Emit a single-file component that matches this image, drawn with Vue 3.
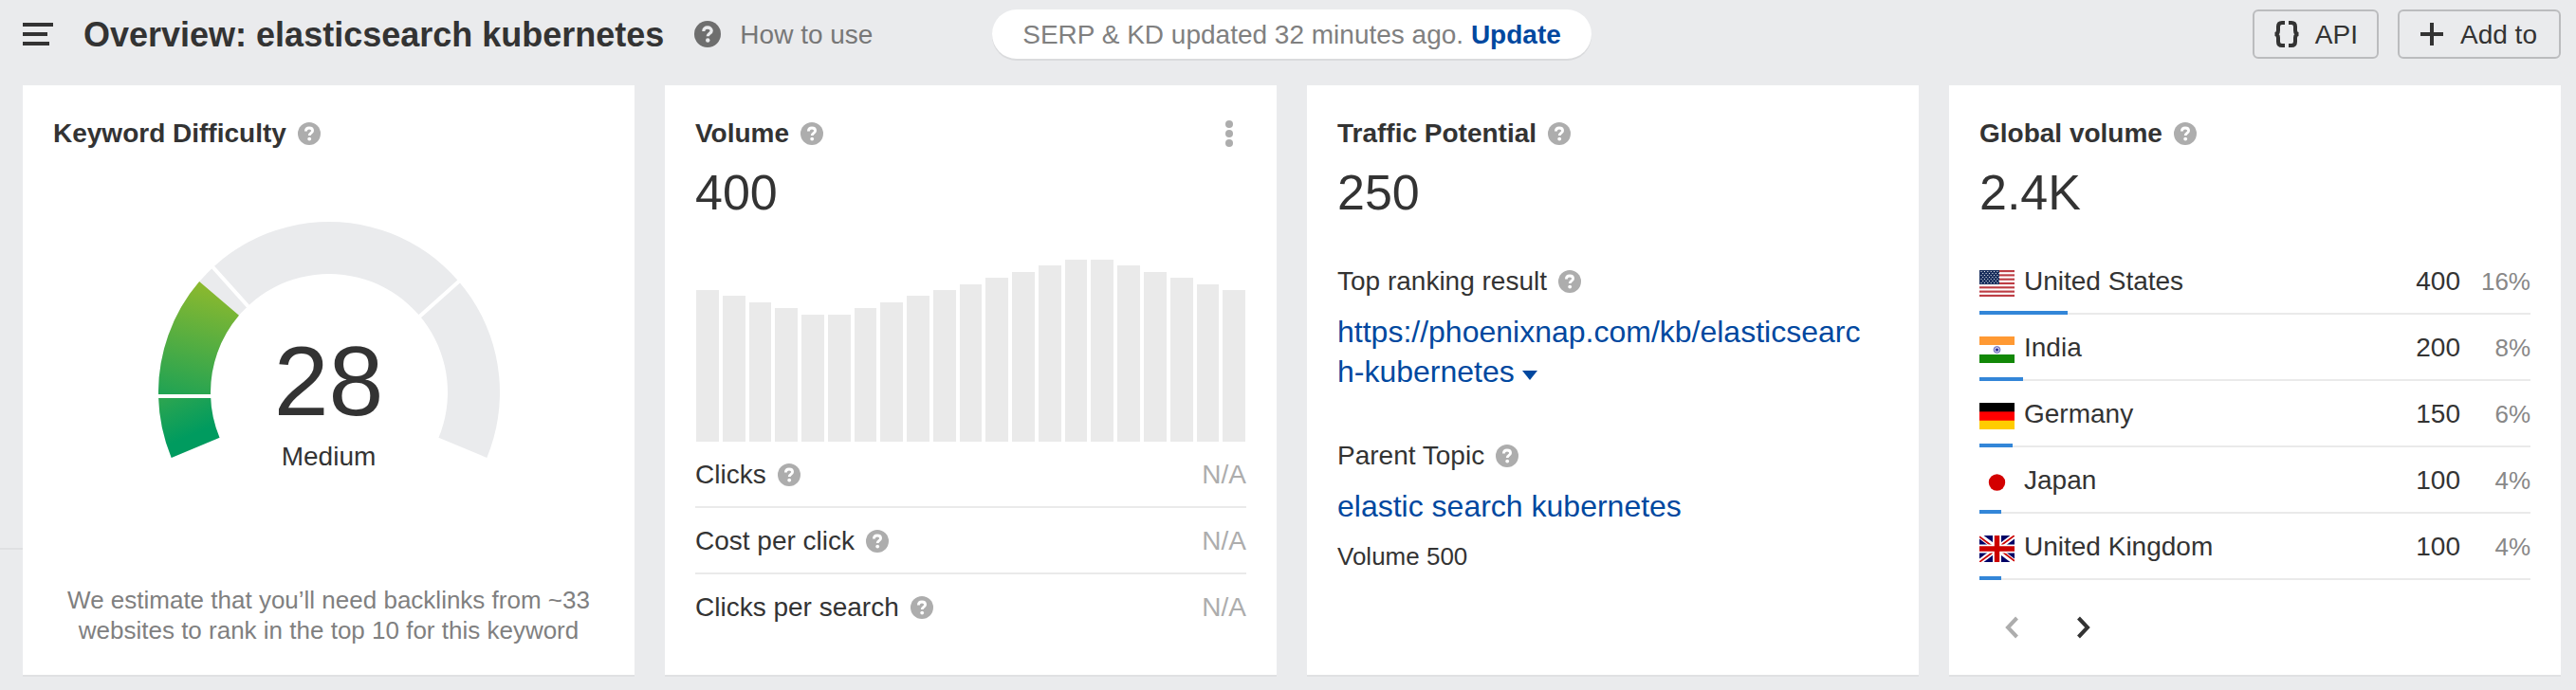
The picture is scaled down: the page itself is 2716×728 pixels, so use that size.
<script setup>
import { h } from 'vue'

const HelpIcon = () =>
  h('svg', { viewBox: '0 0 24 24', class: 'help', 'aria-hidden': 'true' }, [
    h('circle', { cx: 12, cy: 12, r: 12, fill: 'currentColor' }),
    h('path', {
      d: 'M8.4 9.4C8.4 7.2 10 6 12 6s3.6 1.2 3.6 3c0 2.3-3.4 2.500-3.4 4.9',
      fill: 'none',
      stroke: 'var(--help-mark)',
      'stroke-width': 2.8,
    }),
    h('circle', { cx: 12.2, cy: 17.6, r: 1.9, fill: 'var(--help-mark)' }),
  ])

const bars = [25, 24, 23, 22, 21, 21, 22, 23, 24, 25, 26, 27, 28, 29, 30, 30, 29, 28, 27, 26, 25]
const metrics = ['Clicks', 'Cost per click', 'Clicks per search']
const countries = [
  { code: 'us', name: 'United States', volume: 400, share: 16 },
  { code: 'in', name: 'India', volume: 200, share: 8 },
  { code: 'de', name: 'Germany', volume: 150, share: 6 },
  { code: 'jp', name: 'Japan', volume: 100, share: 4 },
  { code: 'gb', name: 'United Kingdom', volume: 100, share: 4 },
]

const point = (r, deg) => {
  const a = (deg * Math.PI) / 180
  return `${(180 - r * Math.cos(a)).toFixed(2)} ${(180 - r * Math.sin(a)).toFixed(2)}`
}
// Ring slice between two angles, measured clockwise from the left horizontal.
const ring = (from, to) => {
  const large = to - from > 180 ? 1 : 0
  return `M${point(180, from)}A180 180 0 ${large} 1 ${point(180, to)}L${point(125, to)}A125 125 0 ${large} 0 ${point(125, from)}Z`
}
const track = ring(-22.5, 202.5)
const filledLow = ring(-22.5, -1.5)
const filledHigh = ring(-1.5, 40.5)

const stars = []
for (let r = 0; r < 7; r++) {
  for (let c = 0; c < 6; c++) stars.push({ x: 2 + c * 3.4 + (r % 2 ? 1.7 : 0), y: 1.5 + r * 2 })
}
</script>

<template>
  <div class="page">
    <header class="topbar">
      <div class="left">
        <button class="icon-button" aria-label="Menu">
          <svg class="menu" viewBox="0 0 32 24"><path d="M0 0h32v4H0zM0 10h26v4H0zM0 20h28v4H0z" /></svg>
        </button>
        <h1>Overview: elasticsearch kubernetes</h1>
        <a href="#" class="how"><HelpIcon /><span>How to use</span></a>
      </div>
      <div class="notice">
        <span>SERP &amp; KD updated 32 minutes ago. </span><a href="#">Update</a>
      </div>
      <div class="right">
        <button class="action">
          <svg viewBox="0 0 28 28">
            <path class="brace" d="M12 2H9Q5 2 5 6v4q0 4-3.5 4Q5 14 5 18v4q0 4 4 4h3M16 2h3q4 0 4 4v4q0 4 3.5 4Q23 14 23 18v4q0 4-4 4h-3" />
          </svg>
          <span>API</span>
        </button>
        <button class="action add">
          <svg viewBox="0 0 28 28"><path d="M12 2h4v10h10v4H16v10h-4V16H2v-4h10z" /></svg>
          <span>Add to</span>
        </button>
      </div>
    </header>

    <hr class="edge" />

    <main class="cards">
      <section class="card">
        <h2>Keyword Difficulty <HelpIcon /></h2>
        <div class="gauge">
          <svg viewBox="0 0 360 252" role="img" aria-label="Keyword difficulty 28 of 100">
            <defs>
              <linearGradient id="kd-low" gradientUnits="userSpaceOnUse" x1="24" y1="180" x2="42" y2="222">
                <stop offset="0" stop-color="#2aa551" />
                <stop offset="1" stop-color="#009b5f" />
              </linearGradient>
              <linearGradient id="kd-high" gradientUnits="userSpaceOnUse" x1="28" y1="186" x2="58" y2="68">
                <stop offset="0" stop-color="#21a353" />
                <stop offset="1" stop-color="#8cb92e" />
              </linearGradient>
            </defs>
            <path :d="track" fill="#eaebed" />
            <path :d="filledLow" fill="url(#kd-low)" />
            <path :d="filledHigh" fill="url(#kd-high)" />
            <path d="M0 184H58M54 44L97 92M320 60L273 102" stroke="#fff" stroke-width="4" />
          </svg>
          <div class="score">
            <strong>28</strong>
            <span>Medium</span>
          </div>
        </div>
        <p class="estimate">We estimate that you’ll need backlinks from ~33 websites to rank in the top 10 for this keyword</p>
      </section>

      <section class="card">
        <div class="card-head">
          <h2>Volume <HelpIcon /></h2>
          <button class="icon-button more" aria-label="More options">
            <svg viewBox="0 0 8 28"><circle cx="4" cy="4" r="4" /><circle cx="4" cy="14" r="4" /><circle cx="4" cy="24" r="4" /></svg>
          </button>
        </div>
        <p class="big">400</p>
        <div class="chart">
          <i v-for="(b, i) in bars" :key="i" :style="{ height: (b / 30) * 100 + '%' }"></i>
        </div>
        <dl class="metrics">
          <div v-for="m in metrics" :key="m">
            <dt>{{ m }} <HelpIcon /></dt>
            <dd>N/A</dd>
          </div>
        </dl>
      </section>

      <section class="card">
        <h2>Traffic Potential <HelpIcon /></h2>
        <p class="big">250</p>
        <h3 class="first">Top ranking result <HelpIcon /></h3>
        <p class="link">
          <a href="#">https://phoenixnap.com/kb/elasticsearch-kubernetes</a>
          <svg class="caret" viewBox="0 0 16 10"><path d="M0 0h16L8 10z" /></svg>
        </p>
        <h3 class="second">Parent Topic <HelpIcon /></h3>
        <p class="link"><a href="#">elastic search kubernetes</a></p>
        <p class="small">Volume 500</p>
      </section>

      <section class="card">
        <h2>Global volume <HelpIcon /></h2>
        <p class="big">2.4K</p>
        <ul class="countries">
          <li v-for="c in countries" :key="c.code">
            <svg class="flag" viewBox="0 0 37 28" preserveAspectRatio="none">
              <template v-if="c.code === 'us'">
                <rect width="37" height="28" fill="#fff" />
                <rect v-for="n in 7" :key="n" :y="(n - 1) * 4.31" width="37" height="2.15" fill="#bd3d44" />
                <rect width="21" height="15" fill="#192f5d" />
                <circle v-for="(s, i) in stars" :key="i" :cx="s.x" :cy="s.y" r="0.6" fill="#fff" />
              </template>
              <template v-else-if="c.code === 'in'">
                <rect width="37" height="28" fill="#fff" />
                <rect width="37" height="9" fill="#f93" />
                <rect y="19" width="37" height="9" fill="#128807" />
                <circle cx="18.5" cy="14" r="3.4" fill="#c5c5e8" stroke="#6666b8" />
                <circle cx="18.5" cy="14" r="1.6" fill="#2a2a98" />
              </template>
              <template v-else-if="c.code === 'de'">
                <rect width="37" height="28" fill="#000" />
                <rect y="9.3" width="37" height="10" fill="#f00" />
                <rect y="18.7" width="37" height="9.3" fill="#fc0" />
              </template>
              <template v-else-if="c.code === 'jp'">
                <rect width="37" height="28" fill="#fff" />
                <circle cx="18.5" cy="14" r="8.7" fill="#d30000" />
              </template>
              <template v-else>
                <rect width="37" height="28" fill="#006" />
                <path d="M0 0L37 28M37 0L0 28" stroke="#fff" stroke-width="5.5" />
                <path d="M0 1.2L15 12.5M37 0L22 11M0 28L15 17M37 26.8L22 15.5" stroke="#c00" stroke-width="1.8" />
                <path d="M18.5 0v28M0 14h37" stroke="#fff" stroke-width="9" />
                <path d="M18.5 0v28M0 14h37" stroke="#c00" stroke-width="5.4" />
              </template>
            </svg>
            <span class="name">{{ c.name }}</span>
            <span class="count">{{ c.volume }}</span>
            <span class="share">{{ c.share }}%</span>
            <i class="meter" :style="{ width: c.share + '%' }"></i>
          </li>
        </ul>
        <nav class="pager">
          <button class="icon-button" disabled aria-label="Previous">
            <svg viewBox="0 0 16 24"><path d="M13.5 2L4 12l9.5 10" /></svg>
          </button>
          <button class="icon-button" aria-label="Next">
            <svg viewBox="0 0 16 24"><path d="M2.5 2L12 12l-9.5 10" /></svg>
          </button>
        </nav>
      </section>
    </main>
  </div>
</template>

<style>
body {
  background: #eaebed;
}
</style>

<style scoped>
* {
  box-sizing: border-box;
}
.page {
  --help-mark: #fff;
  position: relative;
  min-height: 100vh;
  padding: 10px 16px 16px 24px;
  background: #eaebed;
  color: #333;
  font: 28px/32px 'Liberation Sans', Arial, sans-serif;
}
h1, h2, h3, p, ul, dl, dd {
  margin: 0;
  padding: 0;
}
a {
  color: #00489f;
  text-decoration: none;
}
button {
  color: inherit;
  font: inherit;
}
svg {
  display: block;
  flex: none;
}
.icon-button {
  padding: 0;
  border: 0;
  background: none;
}
.help {
  width: 24px;
  height: 24px;
  color: #adadad;
}
.topbar {
  display: grid;
  grid-template-columns: 1fr auto 1fr;
  align-items: center;
  height: 52px;
}
.left,
.right,
.how {
  display: flex;
  align-items: center;
}
.menu {
  width: 32px;
  height: 24px;
  fill: #333;
}
h1 {
  margin-left: 32px;
  padding-top: 2px;
  font-size: 36px;
  line-height: 44px;
  white-space: nowrap;
}
.how {
  --help-mark: #eaebed;
  gap: 20px;
  margin-left: 32px;
  color: #777;
}
.how span,
.action span {
  padding-top: 2px;
}
.how .help {
  width: 28px;
  height: 28px;
  color: #6e6e6e;
}
.notice {
  padding: 11px 32px 9px;
  border-radius: 26px;
  background: #fff;
  box-shadow: 0 2px 0 #dadbdd;
  color: #808080;
  white-space: pre;
}
.notice a {
  font-weight: bold;
}
.right {
  justify-content: flex-end;
  gap: 20px;
}
.action {
  display: flex;
  align-items: center;
  gap: 16px;
  height: 52px;
  padding: 0 20px;
  border: 2px solid #bbbcbe;
  border-radius: 6px;
  background: none;
}
.add {
  min-width: 172px;
}
.action svg {
  width: 28px;
  height: 28px;
  fill: #333;
}
.brace {
  fill: none;
  stroke: #333;
  stroke-width: 4;
}
.edge {
  position: absolute;
  top: 578px;
  left: 0;
  width: 24px;
  height: 2px;
  margin: 0;
  border: 0;
  background: #dfe0e2;
}
.cards {
  display: grid;
  grid-template-columns: repeat(4, minmax(0, 1fr));
  gap: 32px;
  margin-top: 28px;
}
.card {
  display: flex;
  flex-direction: column;
  min-height: 622px;
  padding: 35px 32px 31px;
  background: #fff;
  box-shadow: 0 2px 0 #e0e1e3;
}
h2,
h3,
dt {
  display: flex;
  align-items: center;
  gap: 12px;
  font-size: 28px;
  line-height: 32px;
}
h3 {
  font-weight: normal;
}
.card-head {
  display: flex;
  align-items: center;
  justify-content: space-between;
}
.more {
  width: 36px;
}
.more svg {
  width: 8px;
  height: 28px;
  margin: 0 auto;
  fill: #adadad;
}
.big {
  margin-top: 16px;
  font-size: 52px;
  line-height: 60px;
}
.gauge {
  display: grid;
  justify-items: center;
  margin-top: 77px;
}
.gauge > * {
  grid-area: 1 / 1;
}
.gauge svg {
  width: 360px;
  height: 252px;
}
.score {
  display: flex;
  flex-direction: column;
  align-items: center;
  padding-top: 112px;
}
.score strong {
  font-size: 104px;
  font-weight: normal;
  line-height: 112px;
}
.score span {
  margin-top: 8px;
}
.estimate {
  margin-top: auto;
  color: #808080;
  font-size: 26px;
  text-align: center;
}
.chart {
  display: flex;
  align-items: flex-end;
  gap: 4px;
  height: 192px;
  margin: 41px 1px 0;
}
.chart i {
  flex: 1;
  background: #eaeaea;
}
.metrics div {
  display: flex;
  align-items: center;
  justify-content: space-between;
  height: 70px;
  padding-top: 2px;
  border-bottom: 2px solid #eaeaea;
}
.metrics div:last-child {
  border-color: transparent;
}
.metrics dd {
  color: #adadad;
}
.first {
  margin-top: 48px;
}
.second {
  margin-top: 52px;
}
.link {
  margin-top: 16px;
  padding-right: 24px;
  font-size: 32px;
  line-height: 42px;
  word-break: break-all;
}
.caret {
  display: inline-block;
  width: 16px;
  height: 10px;
  margin-left: 8px;
  vertical-align: 2px;
  fill: #00489f;
}
.small {
  margin-top: 16px;
  font-size: 26px;
}
.countries {
  margin-top: 29px;
  list-style: none;
}
.countries li {
  position: relative;
  display: flex;
  align-items: center;
  height: 70px;
  padding-top: 2px;
  border-bottom: 2px solid #eaeaea;
}
.flag {
  width: 37px;
  height: 28px;
  margin-top: 4px;
}
.name {
  flex: 1;
  margin-left: 10px;
}
.share {
  width: 74px;
  color: #888;
  font-size: 26px;
  text-align: right;
}
.meter {
  position: absolute;
  bottom: -2px;
  left: 0;
  height: 4px;
  background: #3386d8;
}
.pager {
  display: flex;
  gap: 60px;
  margin: 38px 0 0 26px;
}
.pager svg {
  width: 16px;
  height: 24px;
  fill: none;
  stroke: #333;
  stroke-width: 4;
}
.pager button:disabled svg {
  stroke: #adadad;
}
</style>
